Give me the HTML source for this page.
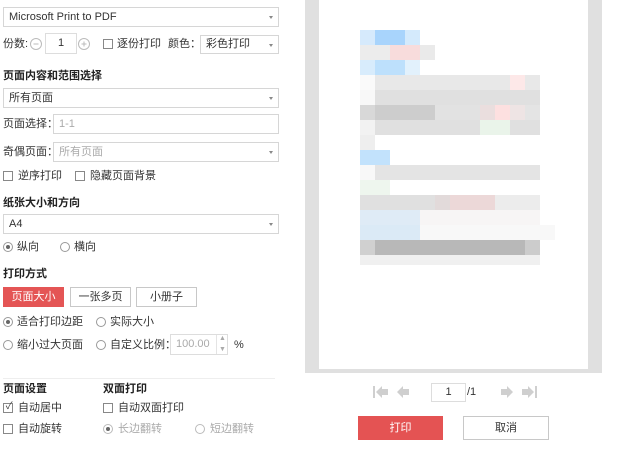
<!DOCTYPE html>
<html><head><meta charset="utf-8"><style>
*{margin:0;padding:0;box-sizing:border-box}
body{width:620px;height:454px;background:#fff;position:relative;overflow:hidden;font-family:"Liberation Sans","Noto Sans CJK SC",sans-serif;font-size:11px;color:#333}
.a{position:absolute;white-space:nowrap;line-height:14px}
.sel{position:absolute;border:1px solid #d6d6d6;background:#fff;padding-left:5px;line-height:18px}
.sel:after{content:"";position:absolute;right:5px;top:8px;border-left:2.5px solid transparent;border-right:2.5px solid transparent;border-top:3px solid #888}
.b{font-weight:bold;color:#222}
.cb{position:absolute;width:10px;height:10px;border:1px solid #888;background:#fff}
.rd{position:absolute;width:10px;height:10px;border:1px solid #999;border-radius:50%;background:#fff}
.rd.on:after{content:"";position:absolute;left:2px;top:2px;width:4px;height:4px;border-radius:50%;background:#666}
.g{color:#aaa}
.btn{position:absolute;border:1px solid #c8c8c8;text-align:center;background:#fff}
</style></head><body>
<div class="sel" style="left:3px;top:7px;width:276px;height:20px">Microsoft Print to PDF</div>

<div class="a" style="left:3px;top:37px">份数:</div>
<svg style="position:absolute;left:29px;top:37px" width="64" height="14" fill="none" stroke="#bbb" stroke-width="1">
<circle cx="7" cy="7" r="5.5"/><path d="M4.5 7 H9.5"/>
<circle cx="55" cy="7" r="5.5"/><path d="M52.5 7 H57.5 M55 4.5 V9.5"/>
</svg>
<div style="position:absolute;left:45px;top:33px;width:32px;height:21px;border:1px solid #ddd;text-align:center;line-height:19px">1</div>
<div class="cb" style="left:103px;top:39px"></div>
<div class="a" style="left:117px;top:37px">逐份打印</div>
<div class="a" style="left:168px;top:37px">颜色：</div>
<div class="sel" style="left:200px;top:35px;width:79px;height:19px;line-height:17px">彩色打印</div>

<div class="a b" style="left:3px;top:69px">页面内容和范围选择</div>
<div class="sel" style="left:3px;top:88px;width:276px;height:20px">所有页面</div>
<div class="a" style="left:3px;top:117px">页面选择：</div>
<div style="position:absolute;left:53px;top:114px;width:226px;height:20px;border:1px solid #d6d6d6;padding-left:5px;line-height:18px;color:#aaa">1-1</div>
<div class="a" style="left:3px;top:145px">奇偶页面：</div>
<div class="sel g" style="left:53px;top:142px;width:226px;height:20px">所有页面</div>
<div class="cb" style="left:3px;top:171px"></div><div class="a" style="left:18px;top:169px">逆序打印</div>
<div class="cb" style="left:75px;top:171px"></div><div class="a" style="left:90px;top:169px">隐藏页面背景</div>

<div class="a b" style="left:3px;top:196px">纸张大小和方向</div>
<div class="sel" style="left:3px;top:214px;width:276px;height:20px">A4</div>
<div class="rd on" style="left:3px;top:242px"></div><div class="a" style="left:17px;top:240px">纵向</div>
<div class="rd" style="left:60px;top:242px"></div><div class="a" style="left:74px;top:240px">横向</div>

<div class="a b" style="left:3px;top:267px">打印方式</div>
<div class="btn" style="left:3px;top:287px;width:61px;height:20px;background:#e45555;border-color:#e45555;color:#fff;line-height:18px">页面大小</div>
<div class="btn" style="left:70px;top:287px;width:61px;height:20px;line-height:18px">一张多页</div>
<div class="btn" style="left:136px;top:287px;width:61px;height:20px;line-height:18px">小册子</div>
<div class="rd on" style="left:3px;top:317px"></div><div class="a" style="left:17px;top:315px">适合打印边距</div>
<div class="rd" style="left:96px;top:317px"></div><div class="a" style="left:110px;top:315px">实际大小</div>
<div class="rd" style="left:3px;top:340px"></div><div class="a" style="left:17px;top:338px">缩小过大页面</div>
<div class="rd" style="left:96px;top:340px"></div><div class="a" style="left:110px;top:338px">自定义比例：</div>
<div style="position:absolute;left:170px;top:334px;width:58px;height:21px;border:1px solid #ddd;color:#aaa;line-height:19px;padding-left:5px">100.00</div>
<div style="position:absolute;left:216px;top:335px;width:1px;height:19px;background:#e4e4e4"></div>
<div class="a g" style="left:219px;top:332px;font-size:7px">▲</div><div class="a g" style="left:219px;top:343px;font-size:7px">▼</div>
<div class="a" style="left:234px;top:338px">%</div>

<div style="position:absolute;left:3px;top:378px;width:272px;height:1px;background:#eee"></div>
<div class="a b" style="left:3px;top:382px">页面设置</div>
<div class="a b" style="left:103px;top:382px">双面打印</div>
<div class="cb" style="left:3px;top:403px"></div><div class="a" style="left:3px;top:400px;font-size:10px;color:#444">&nbsp;✓</div><div class="a" style="left:18px;top:401px">自动居中</div>
<div class="cb" style="left:103px;top:403px"></div><div class="a" style="left:118px;top:401px">自动双面打印</div>
<div class="cb" style="left:3px;top:424px"></div><div class="a" style="left:18px;top:422px">自动旋转</div>
<div class="rd on" style="left:103px;top:424px;border-color:#bbb"></div><div class="a g" style="left:118px;top:422px">长边翻转</div>
<div class="rd" style="left:195px;top:424px;border-color:#bbb"></div><div class="a g" style="left:210px;top:422px">短边翻转</div>

<div style="position:absolute;left:305px;top:0;width:297px;height:373px;background:#e0e0e0"></div>
<div style="position:absolute;left:319px;top:0;width:269px;height:369px;background:#fff"></div>
<svg style="position:absolute;left:360px;top:30px" width="195" height="240">
<g shape-rendering="crispEdges">
<rect x="0" y="0" width="15" height="15" fill="#d6eafc"/><rect x="15" y="0" width="30" height="15" fill="#a8d4fc"/><rect x="45" y="0" width="15" height="15" fill="#d4eafc"/>
<rect x="0" y="15" width="30" height="15" fill="#ececec"/><rect x="30" y="15" width="30" height="15" fill="#f8dcdc"/><rect x="60" y="15" width="15" height="15" fill="#eaeaea"/>
<rect x="0" y="30" width="15" height="15" fill="#d8ecfc"/><rect x="15" y="30" width="30" height="15" fill="#bde0fc"/><rect x="45" y="30" width="15" height="15" fill="#e2f1fc"/>
<rect x="0" y="45" width="180" height="15" fill="#e8e8e8"/><rect x="0" y="45" width="15" height="15" fill="#fafafa"/><rect x="150" y="45" width="15" height="15" fill="#fde8e8"/>
<rect x="0" y="60" width="180" height="15" fill="#e0e0e0"/><rect x="0" y="60" width="15" height="15" fill="#f8f8f8"/>
<rect x="0" y="75" width="75" height="15" fill="#cdcdcd"/><rect x="0" y="75" width="15" height="15" fill="#d8d8d8"/><rect x="75" y="75" width="45" height="15" fill="#e2e2e2"/><rect x="120" y="75" width="15" height="15" fill="#eadede"/><rect x="135" y="75" width="15" height="15" fill="#fde0e0"/><rect x="150" y="75" width="15" height="15" fill="#eee4e4"/><rect x="165" y="75" width="15" height="15" fill="#e4e4e4"/>
<rect x="0" y="90" width="180" height="15" fill="#e0e0e0"/><rect x="0" y="90" width="15" height="15" fill="#f2f2f2"/><rect x="120" y="90" width="30" height="15" fill="#eaf4ea"/>
<rect x="0" y="105" width="15" height="15" fill="#eeeeee"/>
<rect x="0" y="120" width="30" height="15" fill="#c2e2fc"/>
<rect x="0" y="135" width="180" height="15" fill="#e4e4e4"/><rect x="0" y="135" width="15" height="15" fill="#f8f8f8"/>
<rect x="0" y="150" width="30" height="15" fill="#eef6ee"/>
<rect x="0" y="165" width="180" height="15" fill="#e0e0e0"/><rect x="75" y="165" width="15" height="15" fill="#e2dada"/><rect x="90" y="165" width="45" height="15" fill="#ecd8d8"/><rect x="135" y="165" width="45" height="15" fill="#ececec"/>
<rect x="0" y="180" width="60" height="15" fill="#dfebf6"/><rect x="60" y="180" width="120" height="15" fill="#f7f5f5"/>
<rect x="0" y="195" width="60" height="15" fill="#dbeaf6"/><rect x="60" y="195" width="135" height="15" fill="#f8f8f8"/>
<rect x="0" y="210" width="180" height="15" fill="#b8b8b8"/><rect x="0" y="210" width="15" height="15" fill="#d0d0d0"/><rect x="165" y="210" width="15" height="15" fill="#cccccc"/>
<rect x="0" y="225" width="180" height="10" fill="#f0f0f0"/>
</g></svg>

<svg style="position:absolute;left:370px;top:383px" width="170" height="20" fill="#cfcfcf">
<rect x="3" y="3" width="2" height="12"/><path d="M6 9 L12 3 V6 H18 V12 H12 V15 Z"/>
<path d="M27 9 L33 3 V6 H39 V12 H33 V15 Z"/>
<path d="M143 9 L137 3 V6 H131 V12 H137 V15 Z"/>
<path d="M164 9 L158 3 V6 H152 V12 H158 V15 Z"/><rect x="165" y="3" width="2" height="12"/>
</svg>
<div style="position:absolute;left:431px;top:383px;width:35px;height:19px;border:1px solid #ddd;text-align:center;line-height:17px">1</div>
<div class="a" style="left:467px;top:385px">/1</div>
<div class="btn" style="left:358px;top:416px;width:85px;height:24px;background:#e45353;border-color:#e45353;color:#fff;line-height:22px">打印</div>
<div class="btn" style="left:463px;top:416px;width:86px;height:24px;line-height:22px">取消</div>
</body></html>
